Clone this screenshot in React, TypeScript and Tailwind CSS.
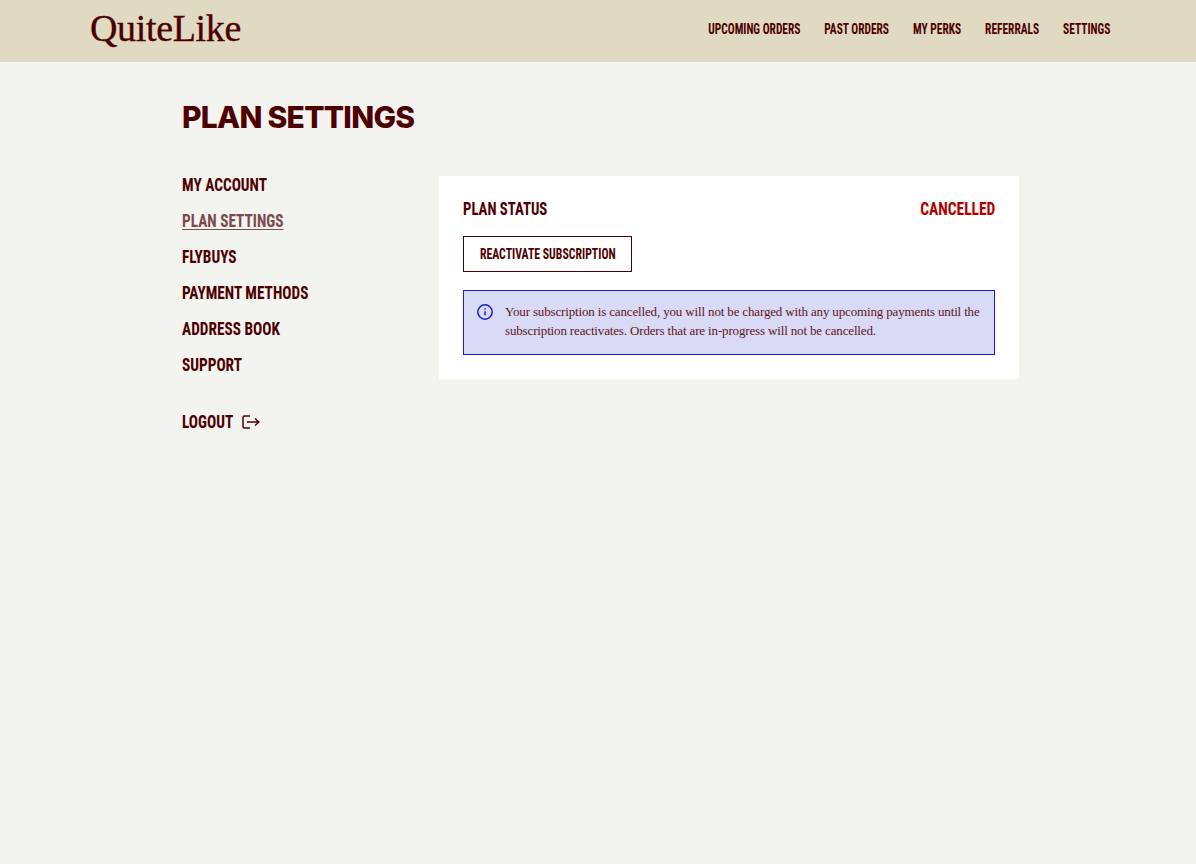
import React from "react";

const cond = "font-['Liberation_Sans_Narrow','Roboto_Condensed',Roboto,sans-serif]";
const nav = ["UPCOMING ORDERS", "PAST ORDERS", "MY PERKS", "REFERRALS", "SETTINGS"];
const side = ["MY ACCOUNT", "PLAN SETTINGS", "FLYBUYS", "PAYMENT METHODS", "ADDRESS BOOK", "SUPPORT"];

export default function App() {
  return (
    <div className="min-h-[864px] bg-[#f3f4ef] text-[#4d0000]">
      <header className="flex h-[62px] items-center justify-between bg-[#e0dac3] pl-[90px] pr-[86px]">
        <div className="-mt-[6px] font-['Liberation_Serif',serif] text-[38px] leading-none tracking-[-0.35px] [-webkit-text-stroke:0.35px_#4d0000]">QuiteLike</div>
        <nav className={`${cond} -mt-[4px] flex origin-right scale-x-[.815] gap-[29.400px] text-[14px] font-bold`}>
          {nav.map((n) => (
            <span key={n}>{n}</span>
          ))}
        </nav>
      </header>
      <main className="pl-[182px] pr-[177px]">
        <h1 className="pt-[37px] font-['Inter',sans-serif] text-[30px] font-extrabold leading-[36px] tracking-[-0.72px]">PLAN SETTINGS</h1>
        <div className="mt-[41px] flex items-start">
          <aside className={`${cond} w-[257px] text-[18px] font-bold leading-[24px]`}>
            <ul className="-mt-[3px] flex flex-col gap-3">
              {side.map((s) => (
                <li key={s} className={s === "PLAN SETTINGS" ? "origin-left scale-x-[.85] text-[#7a4a4c] underline underline-offset-2" : "origin-left scale-x-[.85]"}>{s}</li>
              ))}
            </ul>
            <div className="mt-[33px] flex items-center gap-[9px]">
              <span className="-mr-[9px] origin-left scale-x-[.85]">LOGOUT</span>
              <svg width="18" height="14" viewBox="0 0 18 14" fill="none" stroke="#4d0000" strokeWidth="1.5">
                <path d="M8 1H2.500A1.500 1.500 0 0 0 1 2.500v9A1.500 1.500 0 0 0 2.500 13H8" />
                <path d="M5 7h12M13 3.500 17 7l-4 3.500" />
              </svg>
            </div>
          </aside>
          <section className="w-[580px] bg-white p-6">
            <div className={`${cond} flex justify-between text-[18px] font-bold leading-[18px]`}>
              <span className="origin-left scale-x-[.82]">PLAN STATUS</span>
              <span className="origin-right scale-x-[.86] text-[#b00000]">CANCELLED</span>
            </div>
            <button className={`${cond} mt-[18px] block h-9 w-[169px] border border-[#4d0000] text-[14px] font-bold`}>
              <span className="inline-block scale-x-[.84] whitespace-nowrap">REACTIVATE SUBSCRIPTION</span>
            </button>
            <div className="mt-[18px] flex h-[65px] gap-3 border border-[#1a1ad6] bg-[#d9daf5] pl-[13px] pt-[11px]">
              <svg className="mt-[2px] shrink-0" width="16" height="16" viewBox="0 0 16 16" fill="none" stroke="#1a1ad6" strokeWidth="1.5">
                <circle cx="8" cy="8" r="7.200" />
                <path d="M8 7.200v4M8 4.300v1.300" />
              </svg>
              <p className="font-['Liberation_Serif',serif] text-[13px] leading-[19px] tracking-[-0.15px] whitespace-nowrap text-[#5e1522]">
                Your subscription is cancelled, you will not be charged with any upcoming payments until the
                <br />
                subscription reactivates. Orders that are in-progress will not be cancelled.
              </p>
            </div>
          </section>
        </div>
      </main>
    </div>
  );
}
